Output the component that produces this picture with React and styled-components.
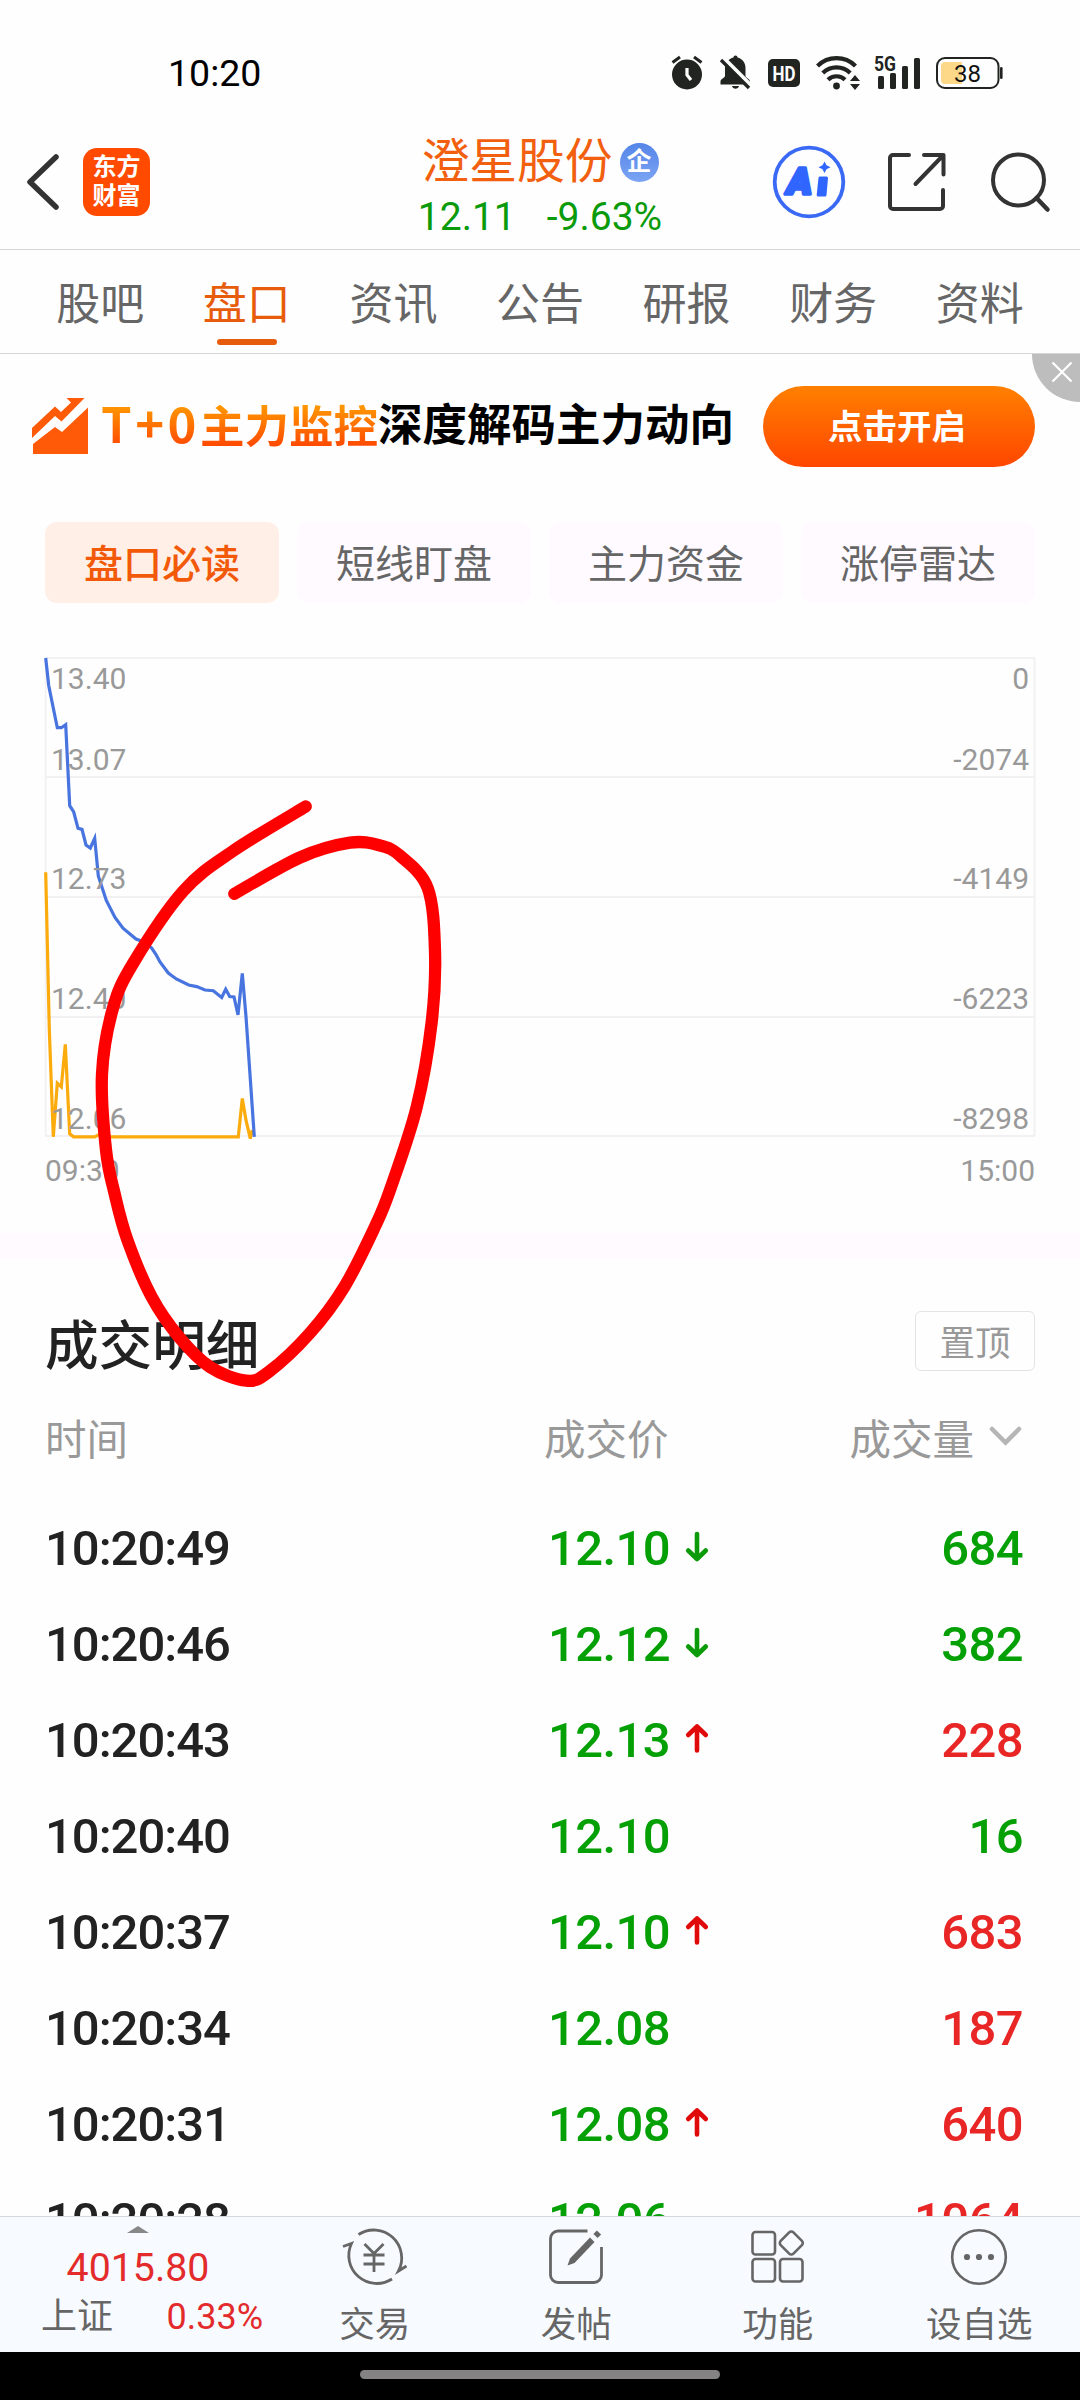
import styled, { createGlobalStyle, css } from "styled-components";

const GlobalStyle = createGlobalStyle`
  * {
    box-sizing: border-box;
  }
  body {
    margin: 0;
    background: #fefefe;
    font-family: Roboto, "Noto Sans CJK SC", sans-serif;
  }
  svg {
    display: block;
    flex: none;
    overflow: visible;
  }
`;

const Screen = styled.div`
  position: relative;
  display: flex;
  flex-direction: column;
  width: 1080px;
  height: 2400px;
  overflow: hidden;
  background: #fefefe;
`;

/* status bar */
const StatusBar = styled.div`
  display: flex;
  align-items: center;
  justify-content: space-between;
  height: 108px;
  padding: 37px 77px 0 168px;
  flex: none;
`;
const Clock = styled.span`
  padding-top: 2px;
  font-size: 37.5px;
  line-height: 71px;
  color: #000;
`;
const StatusIcons = styled.div`
  display: flex;
  align-items: center;
`;
const IconSlot = styled.div`
  margin-left: ${(props) => props.$gap || 0}px;
`;

/* header */
const Header = styled.div`
  display: grid;
  grid-template-columns: 1fr auto 1fr;
  height: 142px;
  padding: 0 30px 0 26px;
  border-bottom: 1px solid #d6d6d6;
  flex: none;
`;
const HeaderLeft = styled.div`
  display: flex;
  align-items: center;
  gap: 24px;
  padding-top: 7px;
`;
const Logo = styled.div`
  display: flex;
  flex-direction: column;
  align-items: center;
  justify-content: center;
  width: 67px;
  height: 68px;
  border-radius: 14px;
  background: #ff4a00;
  color: #fff;
  font-size: 24px;
  line-height: 29px;
  font-weight: 700;
`;
const HeaderCenter = styled.div`
  display: flex;
  flex-direction: column;
  align-items: center;
  padding: 28px 0 0 4px;
`;
const StockName = styled.div`
  display: flex;
  align-items: center;
  gap: 7px;
  height: 52px;
  font-size: 47.8px;
  line-height: 52px;
  color: #f2600f;
`;
const Badge = styled.span`
  width: 39px;
  height: 39px;
  border-radius: 50%;
  background: linear-gradient(#5585e8, #7ba4f3);
  color: #fff;
  font-size: 25px;
  line-height: 37px;
  font-weight: 700;
  text-align: center;
`;
const StockPrice = styled.div`
  display: flex;
  gap: 31px;
  font-size: 39px;
  line-height: 58px;
  color: #0a9a0a;
`;
const HeaderRight = styled.div`
  display: flex;
  align-items: center;
  justify-content: flex-end;
  padding-top: 7px;
`;

/* tabs */
const Tabs = styled.div`
  display: grid;
  grid-template-columns: repeat(7, 1fr);
  height: 104px;
  padding: 0 27px;
  border-bottom: 1px solid #d6d6d6;
  flex: none;
`;
const Tab = styled.div`
  display: flex;
  flex-direction: column;
  align-items: center;
  padding-top: 21px;
  font-size: 44px;
  line-height: 68px;
  color: ${(props) => (props.$active ? "#e65c0a" : "#666")};
`;
const TabLine = styled.div`
  width: 60px;
  height: 6px;
  border-radius: 3px;
  background: #e65c0a;
`;

/* banner */
const Banner = styled.div`
  position: relative;
  display: flex;
  align-items: center;
  height: 144px;
  padding: 0 45px 0 31px;
  flex: none;
`;
const BannerText = styled.div`
  display: flex;
  flex: 1;
  margin: 0 0 6px 12px;
  font-family: "Noto Sans CJK SC", sans-serif;
  font-size: 44.5px;
  line-height: 60px;
  font-weight: 700;
  color: #000;
  white-space: nowrap;
`;
const Highlight = styled.span`
  background: linear-gradient(#ffa000 15%, #ff4c00 85%);
  background-clip: text;
  -webkit-text-fill-color: transparent;
`;
const Symbols = styled.span`
  font-size: 49px;
  letter-spacing: 3.5px;
`;
const BannerButton = styled.button`
  width: 272px;
  height: 81px;
  padding: 0 4px 4px 0;
  border: none;
  border-radius: 41px;
  background: linear-gradient(#ff8000, #ff4600);
  color: #fff;
  font-family: "Noto Sans CJK SC", sans-serif;
  font-size: 34.5px;
  font-weight: 700;
`;
const CloseCorner = styled.div`
  position: absolute;
  top: 0;
  right: 0;
  width: 48px;
  height: 48px;
  padding: 8px 0 0 20px;
  border-bottom-left-radius: 48px;
  background: #bdbdbd;
`;

/* filter pills */
const Pills = styled.div`
  display: grid;
  grid-template-columns: repeat(4, 1fr);
  gap: 18px;
  padding: 24px 45px 0;
  flex: none;
`;
const Pill = styled.div`
  height: 81px;
  border-radius: 12px;
  background: #fefaff;
  color: #666;
  font-size: 39px;
  line-height: 86px;
  text-align: center;
  ${(props) =>
    props.$active &&
    css`
      background: #ffefe7;
      color: #f25a0a;
      font-weight: 500;
    `}
`;

const ChartWrap = styled.div`
  height: 630px;
  flex: none;
`;
const Divider = styled.div`
  height: 25px;
  background: #fefaff;
  flex: none;
`;

/* trade list */
const ListHead = styled.div`
  display: flex;
  align-items: center;
  justify-content: space-between;
  height: 60px;
  margin: 53px 45px 0;
  flex: none;
`;
const ListTitle = styled.h2`
  margin: 12px 0 0;
  font-size: 53.6px;
  line-height: 60px;
  font-weight: 500;
  color: #222;
`;
const PinButton = styled.div`
  width: 120px;
  height: 60px;
  border: 1px solid #e3e3e3;
  border-radius: 6px;
  color: #999;
  font-size: 35.5px;
  line-height: 64px;
  text-align: center;
`;
const Row = styled.div`
  display: grid;
  grid-template-columns: 500px 200px 1fr;
  align-items: center;
  height: 96px;
  padding: 0 57px 0 45px;
  font-size: 49px;
  font-weight: 500;
  letter-spacing: -0.6px;
  color: #222;
  flex: none;
`;
const HeadRow = styled(Row)`
  height: 100px;
  margin-top: 16px;
  margin-bottom: 13px;
  font-size: 41.5px;
  font-weight: 400;
  letter-spacing: 0;
  color: #999;
`;
const Rows = styled.div`
  height: 716px;
  overflow: hidden;
  flex: none;
`;
const TimeCell = styled.span`
  letter-spacing: -1px;
`;
const PriceCell = styled.div`
  display: flex;
  align-items: center;
  gap: 16px;
  padding-left: ${(props) => (props.$head ? 0 : 3)}px;
  margin-left: ${(props) => (props.$head ? -1 : 0)}px;
  color: ${(props) => (props.$head ? "#999" : "#05a005")};
`;
const VolumeCell = styled.div`
  display: flex;
  align-items: center;
  justify-content: flex-end;
  gap: 15px;
  color: ${(props) => props.$color || "#999"};
`;

/* bottom bar */
const BottomBar = styled.div`
  display: flex;
  height: 136px;
  border-top: 1px solid #d3d6da;
  background: #f7faff;
  flex: none;
`;
const IndexBox = styled.div`
  display: flex;
  flex-direction: column;
  align-items: center;
  width: 274px;
  padding: 9px 0 0 2px;
  color: #e32b2b;
`;
const IndexValue = styled.div`
  margin-top: 11px;
  font-size: 39.3px;
  line-height: 48px;
`;
const IndexRow = styled.div`
  display: flex;
  align-self: stretch;
  justify-content: space-between;
  padding: 0 11px 0 39px;
  font-size: 36px;
  line-height: 51px;
`;
const IndexName = styled.span`
  font-size: 36px;
  color: #666;
`;
const NavItem = styled.div`
  display: flex;
  flex: 1;
  flex-direction: column;
  align-items: center;
  padding-top: 10px;
  font-size: 35.5px;
  line-height: 76px;
  color: #666;
`;
const HomeBar = styled.div`
  display: flex;
  justify-content: center;
  height: 48px;
  padding-top: 18px;
  background: #000;
  flex: none;
`;
const HomeHandle = styled.div`
  width: 360px;
  height: 9px;
  border-radius: 5px;
  background: #858284;
`;
const Scribble = styled.svg`
  position: absolute;
  top: 780px;
  left: 80px;
  pointer-events: none;
`;

const tabs = ["股吧", "盘口", "资讯", "公告", "研报", "财务", "资料"];
const pills = ["盘口必读", "短线盯盘", "主力资金", "涨停雷达"];

const RED = "#e92626";
const GREEN = "#05a005";

const trades = [
  { time: "10:20:49", price: "12.10", dir: "down", volume: 684, color: GREEN },
  { time: "10:20:46", price: "12.12", dir: "down", volume: 382, color: GREEN },
  { time: "10:20:43", price: "12.13", dir: "up", volume: 228, color: RED },
  { time: "10:20:40", price: "12.10", volume: 16, color: GREEN },
  { time: "10:20:37", price: "12.10", dir: "up", volume: 683, color: RED },
  { time: "10:20:34", price: "12.08", volume: 187, color: RED },
  { time: "10:20:31", price: "12.08", dir: "up", volume: 640, color: RED },
  { time: "10:20:28", price: "12.06", volume: 1064, color: RED },
];

// chart space: x as on screen, y counted from the bottom edge of the pills
const gridLines = [55, 174, 294, 414, 533];
const leftLabels = [
  ["13.40", 86],
  ["13.07", 166.5],
  ["12.73", 286],
  ["12.40", 406],
  ["12.06", 526],
];
const rightLabels = [
  ["0", 86],
  ["-2074", 166.5],
  ["-4149", 286],
  ["-6223", 406],
  ["-8298", 526],
];
const priceLine =
  "45.7,55 48.7,82.5 57.3,124.7 61.3,124.7 65.7,121.7 69.7,202.7 73.7,209 78,225.3 82,226.4 86,242 90.3,245 94.7,235.3 98.3,273 106.3,297.4 115,314.5 123,325.2 136,336 144,339 151.7,345 156,351.5 160,359 168.3,370 176.3,376 188.7,382 196.7,383.6 205,387 213.3,387.7 221.7,394.4 225.7,386.2 229.7,393.6 234,394 238,411.8 242.3,370.3 246,413.6 254.3,533.8";
const flowLine =
  "45.7,269.3 49.3,426.6 53.3,533.8 57.3,480.2 61.3,483.9 65.3,441.4 69.7,530.9 73.7,533.8 94.7,533.8 100,531 105,533.8 238.3,533.8 242.3,495.4 246,517.2 250.3,535.7 252.3,527";

const scribblePoints = [
  [305.7, 806.5],
  [233, 851],
  [183.3, 891],
  [133.3, 963],
  [113, 1008],
  [102, 1074],
  [106, 1150],
  [114.7, 1194],
  [127.4, 1240],
  [151.5, 1296.7],
  [179, 1337],
  [210, 1367],
  [246.2, 1380.7],
  [268.6, 1372],
  [310, 1333],
  [344.4, 1286.7],
  [375.3, 1226],
  [390, 1190],
  [416.7, 1107],
  [431.7, 1022],
  [435, 951],
  [427.7, 888],
  [400, 855.7],
  [380, 845.5],
  [350, 842.7],
  [300, 857.5],
  [234.3, 893.8],
];

// Catmull-Rom through the points, as cubic segments
const smoothPath = (pts) =>
  pts.slice(0, -1).reduce((d, p, i) => {
    const prev = pts[i - 1] || p;
    const next = pts[i + 1];
    const after = pts[i + 2] || next;
    const c1 = [p[0] + (next[0] - prev[0]) / 6, p[1] + (next[1] - prev[1]) / 6];
    const c2 = [next[0] - (after[0] - p[0]) / 6, next[1] - (after[1] - p[1]) / 6];
    return `${d}C${c1} ${c2} ${next}`;
  }, `M${pts[0]}`);

const Chart = () => (
  <svg width="1080" height="630" viewBox="0 0 1080 630" fill="none">
    <g stroke="#f3f0f3" strokeWidth="1.8">
      {gridLines.map((y) => (
        <path key={y} d={`M45 ${y}H1035`} />
      ))}
      <path d="M45.7 55V533M1034.5 55V533" />
    </g>
    <polyline points={flowLine} stroke="#fbab0c" strokeWidth="3.2" />
    <polyline points={priceLine} stroke="#4874e0" strokeWidth="3.2" />
    <g fill="#999" fontSize="30">
      {leftLabels.map(([text, y]) => (
        <text key={text} x="51" y={y}>
          {text}
        </text>
      ))}
      {rightLabels.map(([text, y]) => (
        <text key={text} x="1029" y={y} textAnchor="end">
          {text}
        </text>
      ))}
      <text x="45" y="578">
        09:30
      </text>
      <text x="1035" y="578" textAnchor="end">
        15:00
      </text>
    </g>
  </svg>
);

const Arrow = ({ dir }) => (
  <svg
    width="24"
    height="30"
    viewBox="0 0 24 30"
    fill="none"
    stroke={dir === "up" ? "#e00a0a" : "#0a9a0a"}
    strokeWidth="4.6"
    strokeLinecap="round"
    strokeLinejoin="round"
  >
    {dir === "up" ? (
      <path d="M11 25.500V1.500M2.200 10L11 1.500L19.800 10" />
    ) : (
      <path d="M11 1V26M2.200 17.500L11 26L19.800 17.500" />
    )}
  </svg>
);

const AlarmIcon = () => (
  <svg width="32" height="35" viewBox="0 0 32 35" fill="none">
    <circle cx="16" cy="19.5" r="15" fill="#212421" />
    <path d="M1.5 7.5L9 2M30.5 7.5L23 2" stroke="#212421" strokeWidth="3" />
    <path d="M16 13V20L20 25" stroke="#fff" strokeWidth="3.2" />
  </svg>
);

const BellOffIcon = () => (
  <svg width="31" height="35" viewBox="0 0 31 35" fill="none">
    <path
      d="M15.500 0.500c1.200 0 2 .9 2 2.100c5 1.200 8 5.200 8 10.400v8c0 1.500 4.500 3 4.500 5.500v3H.5v-3c0-2.500 4.500-4 4.500-5.500v-8c0-5.200 3.500-9.200 8.500-10.400c0-1.200.8-2.100 2-2.100z"
      fill="#212421"
    />
    <path d="M12 31h7c-.8 3.500-6.200 3.500-7 0z" fill="#212421" />
    <path d="M3 2.500L32 31.500" stroke="#fefefe" strokeWidth="4" />
    <path d="M1 5L29 33" stroke="#212421" strokeWidth="3.400" />
  </svg>
);

const HdIcon = () => (
  <svg width="32" height="28" viewBox="0 0 32 28">
    <rect width="32" height="28" rx="5" fill="#212421" />
    <text
      x="16"
      y="21.500"
      fill="#fff"
      fontSize="21"
      fontWeight="700"
      textAnchor="middle"
      textLength="23"
      lengthAdjust="spacingAndGlyphs"
    >
      HD
    </text>
  </svg>
);

const WifiIcon = () => (
  <svg width="45" height="35" viewBox="0 0 45 35" fill="none">
    <g stroke="#212421" strokeWidth="4.200">
      <path d="M1.500 11A27 27 0 0 1 39.500 11" />
      <path d="M6.800 18A19.500 19.500 0 0 1 34.200 18" />
      <path d="M12 24.800A12 12 0 0 1 29 24.800" />
    </g>
    <circle cx="20.500" cy="31" r="3.400" fill="#212421" />
    <path d="M39 20l5 6H34zM39 35l5-6H34z" fill="#212421" />
  </svg>
);

const SignalIcon = () => (
  <svg width="47" height="33" viewBox="0 0 47 33" fill="#212421">
    <text
      x="0"
      y="15"
      fontSize="20.500"
      fontWeight="700"
      textLength="22"
      lengthAdjust="spacingAndGlyphs"
    >
      5G
    </text>
    <rect x="4" y="20" width="6" height="13" rx="1.500" />
    <rect x="16" y="17" width="6" height="16" rx="1.500" />
    <rect x="28" y="10" width="6" height="23" rx="1.500" />
    <rect x="40" y="2" width="6" height="31" rx="1.500" />
  </svg>
);

const BatteryIcon = () => (
  <svg width="67" height="32" viewBox="0 0 67 32" fill="none">
    <rect x="1" y="1" width="61.500" height="30" rx="8" stroke="#212421" strokeWidth="2" />
    <path d="M26 5H9a4 4 0 0 0-4 4v14a4 4 0 0 0 4 4h17z" fill="#fdd888" />
    <rect x="64" y="10" width="2.600" height="12" rx="1.300" fill="#212421" />
    <text x="31.500" y="24.500" fontSize="24" fill="#111" textAnchor="middle">
      38
    </text>
  </svg>
);

const BackIcon = () => (
  <svg width="33" height="58" viewBox="0 0 33 58" fill="none">
    <path
      d="M30 4L4 29L30 54"
      stroke="#333"
      strokeWidth="5.500"
      strokeLinecap="round"
      strokeLinejoin="round"
    />
  </svg>
);

const AiIcon = () => (
  <svg width="74" height="74" viewBox="0 0 74 74" fill="none">
    <circle cx="37" cy="37" r="34.300" stroke="#3a6af5" strokeWidth="3.800" />
    <g fill="#3066ff" stroke="#3066ff" strokeLinejoin="round">
      <text
        x="15"
        y="48.500"
        fontSize="37"
        fontWeight="900"
        fontStyle="italic"
        strokeWidth="3.400"
        textLength="25"
        lengthAdjust="spacingAndGlyphs"
      >
        A
      </text>
      <path d="M48 33h6.500l-1.500 17h-6.800z" strokeWidth="3" />
    </g>
    <path d="M52.500 16.500l2 3.800 4 2-4 2-2 3.800-2-3.800-4-2 4-2z" fill="#3066ff" />
  </svg>
);

const ShareIcon = () => (
  <svg
    width="60"
    height="60"
    viewBox="0 0 60 60"
    fill="none"
    stroke="#333"
    strokeWidth="4"
    strokeLinecap="round"
    strokeLinejoin="round"
  >
    <path d="M22 3H6a3 3 0 0 0-3 3V54a3 3 0 0 0 3 3H53a3 3 0 0 0 3-3V38" />
    <path d="M37 3H56.500V22.500M56 3.500L28.500 32" />
  </svg>
);

const SearchIcon = () => (
  <svg width="60" height="60" viewBox="0 0 60 60" fill="none" stroke="#333" strokeWidth="4">
    <circle cx="28.500" cy="28" r="25.500" />
    <path d="M46.500 46L57.500 57.500" strokeLinecap="round" strokeWidth="4.500" />
  </svg>
);

const TrendIcon = () => (
  <svg width="58" height="56" viewBox="0 0 58 56" fill="#ff5a08">
    <path d="M1 30L24 8.500L30 14L40 4.500L35.500 0H53.500L30.500 23.500L24 18L1 40z" />
    <path d="M2 46L24 29L31 34L57 9.500V56H2z" />
  </svg>
);

const TradeIcon = () => (
  <svg width="66" height="60" viewBox="0 0 66 60" fill="none" stroke="#666" strokeWidth="2.800">
    <path d="M16.500 7.500A28 28 0 0 1 56.500 44L64.500 39" />
    <path d="M50 52A28 28 0 0 1 9.500 16.500L1 19.500" />
    <path d="M22.500 17L32 26.500L41.500 17M32 26.500V45M21.500 28H42.500M21.500 37H42.500" />
  </svg>
);

const PostIcon = () => (
  <svg width="55" height="60" viewBox="0 0 55 60" fill="none">
    <path
      d="M38.500 4H9a7.500 7.500 0 0 0-7.500 7.500V48a7.500 7.500 0 0 0 7.500 7.500H45a7.500 7.500 0 0 0 7.500-7.500V20"
      stroke="#666"
      strokeWidth="2.800"
    />
    <path d="M41 10.500L45.500 15L25.500 36L18.500 38.500L21 31.500z" fill="#666" />
    <path d="M46.500 9L50 5.500" stroke="#666" strokeWidth="6" />
  </svg>
);

const GridIcon = () => (
  <svg width="54" height="60" viewBox="0 0 54 60" fill="none" stroke="#666" strokeWidth="2.600">
    <rect x="1.500" y="5" width="22.500" height="22.500" rx="3" />
    <rect x="1.500" y="32" width="22.500" height="22.500" rx="3" />
    <rect x="29" y="32" width="22.500" height="22.500" rx="3" />
    <rect x="31.300" y="7" width="18" height="18" rx="3" transform="rotate(45 40.300 16)" />
  </svg>
);

const MoreIcon = () => (
  <svg width="58" height="60" viewBox="0 0 58 60" fill="none">
    <circle cx="29" cy="30" r="26.800" stroke="#666" strokeWidth="2.600" />
    <g fill="#666">
      <circle cx="17" cy="30" r="3.100" />
      <circle cx="29" cy="30" r="3.100" />
      <circle cx="41" cy="30" r="3.100" />
    </g>
  </svg>
);

const navItems = [
  { label: "交易", Icon: TradeIcon },
  { label: "发帖", Icon: PostIcon },
  { label: "功能", Icon: GridIcon },
  { label: "设自选", Icon: MoreIcon },
];

const App = () => {
  return (
    <Screen>
      <GlobalStyle />
      <StatusBar>
        <Clock>10:20</Clock>
        <StatusIcons>
          <IconSlot>
            <AlarmIcon />
          </IconSlot>
          <IconSlot $gap={17}>
            <BellOffIcon />
          </IconSlot>
          <IconSlot $gap={17}>
            <HdIcon />
          </IconSlot>
          <IconSlot $gap={16}>
            <WifiIcon />
          </IconSlot>
          <IconSlot $gap={13}>
            <SignalIcon />
          </IconSlot>
          <IconSlot $gap={15}>
            <BatteryIcon />
          </IconSlot>
        </StatusIcons>
      </StatusBar>

      <Header>
        <HeaderLeft>
          <BackIcon />
          <Logo>
            <span>东方</span>
            <span>财富</span>
          </Logo>
        </HeaderLeft>
        <HeaderCenter>
          <StockName>
            澄星股份
            <Badge>企</Badge>
          </StockName>
          <StockPrice>
            <span>12.11</span>
            <span>-9.63%</span>
          </StockPrice>
        </HeaderCenter>
        <HeaderRight>
          <IconSlot>
            <AiIcon />
          </IconSlot>
          <IconSlot $gap={41}>
            <ShareIcon />
          </IconSlot>
          <IconSlot $gap={43}>
            <SearchIcon />
          </IconSlot>
        </HeaderRight>
      </Header>

      <Tabs>
        {tabs.map((name) => (
          <Tab key={name} $active={name === "盘口"}>
            {name}
            {name === "盘口" && <TabLine />}
          </Tab>
        ))}
      </Tabs>

      <Banner>
        <TrendIcon />
        <BannerText>
          <Highlight>
            <Symbols>T+0</Symbols>主力监控
          </Highlight>
          深度解码主力动向
        </BannerText>
        <BannerButton>点击开启</BannerButton>
        <CloseCorner>
          <svg width="20" height="20" viewBox="0 0 20 20" stroke="#fff" strokeWidth="2.200">
            <path d="M0.500 0.500L19.500 19.500M19.500 0.500L0.500 19.500" />
          </svg>
        </CloseCorner>
      </Banner>

      <Pills>
        {pills.map((name, i) => (
          <Pill key={name} $active={i === 0}>
            {name}
          </Pill>
        ))}
      </Pills>

      <ChartWrap>
        <Chart />
      </ChartWrap>
      <Divider />

      <ListHead>
        <ListTitle>成交明细</ListTitle>
        <PinButton>置顶</PinButton>
      </ListHead>
      <HeadRow>
        <span>时间</span>
        <PriceCell $head>成交价</PriceCell>
        <VolumeCell>
          成交量
          <svg
            width="34"
            height="20"
            viewBox="0 0 34 20"
            fill="none"
            stroke="#b5b5b5"
            strokeWidth="4.500"
            strokeLinecap="round"
          >
            <path d="M3 2L16.500 15.500L30 2" />
          </svg>
        </VolumeCell>
      </HeadRow>
      <Rows>
        {trades.map((trade) => (
          <Row key={trade.time}>
            <TimeCell>{trade.time}</TimeCell>
            <PriceCell>
              {trade.price}
              {trade.dir && <Arrow dir={trade.dir} />}
            </PriceCell>
            <VolumeCell $color={trade.color}>{trade.volume}</VolumeCell>
          </Row>
        ))}
      </Rows>

      <BottomBar>
        <IndexBox>
          <svg width="22" height="7" viewBox="0 0 22 7">
            <path d="M11 0L22 7H0z" fill="#888" />
          </svg>
          <IndexValue>4015.80</IndexValue>
          <IndexRow>
            <IndexName>上证</IndexName>
            <span>0.33%</span>
          </IndexRow>
        </IndexBox>
        {navItems.map(({ label, Icon }) => (
          <NavItem key={label}>
            <Icon />
            {label}
          </NavItem>
        ))}
      </BottomBar>
      <HomeBar>
        <HomeHandle />
      </HomeBar>

      {/* hand-drawn marker circle over the drop */}
      <Scribble width="380" height="620" viewBox="80 780 380 620" fill="none">
        <path
          d={smoothPath(scribblePoints)}
          stroke="#f00"
          strokeWidth="12.300"
          strokeLinecap="round"
          strokeLinejoin="round"
        />
      </Scribble>
    </Screen>
  );
};

export default App;
